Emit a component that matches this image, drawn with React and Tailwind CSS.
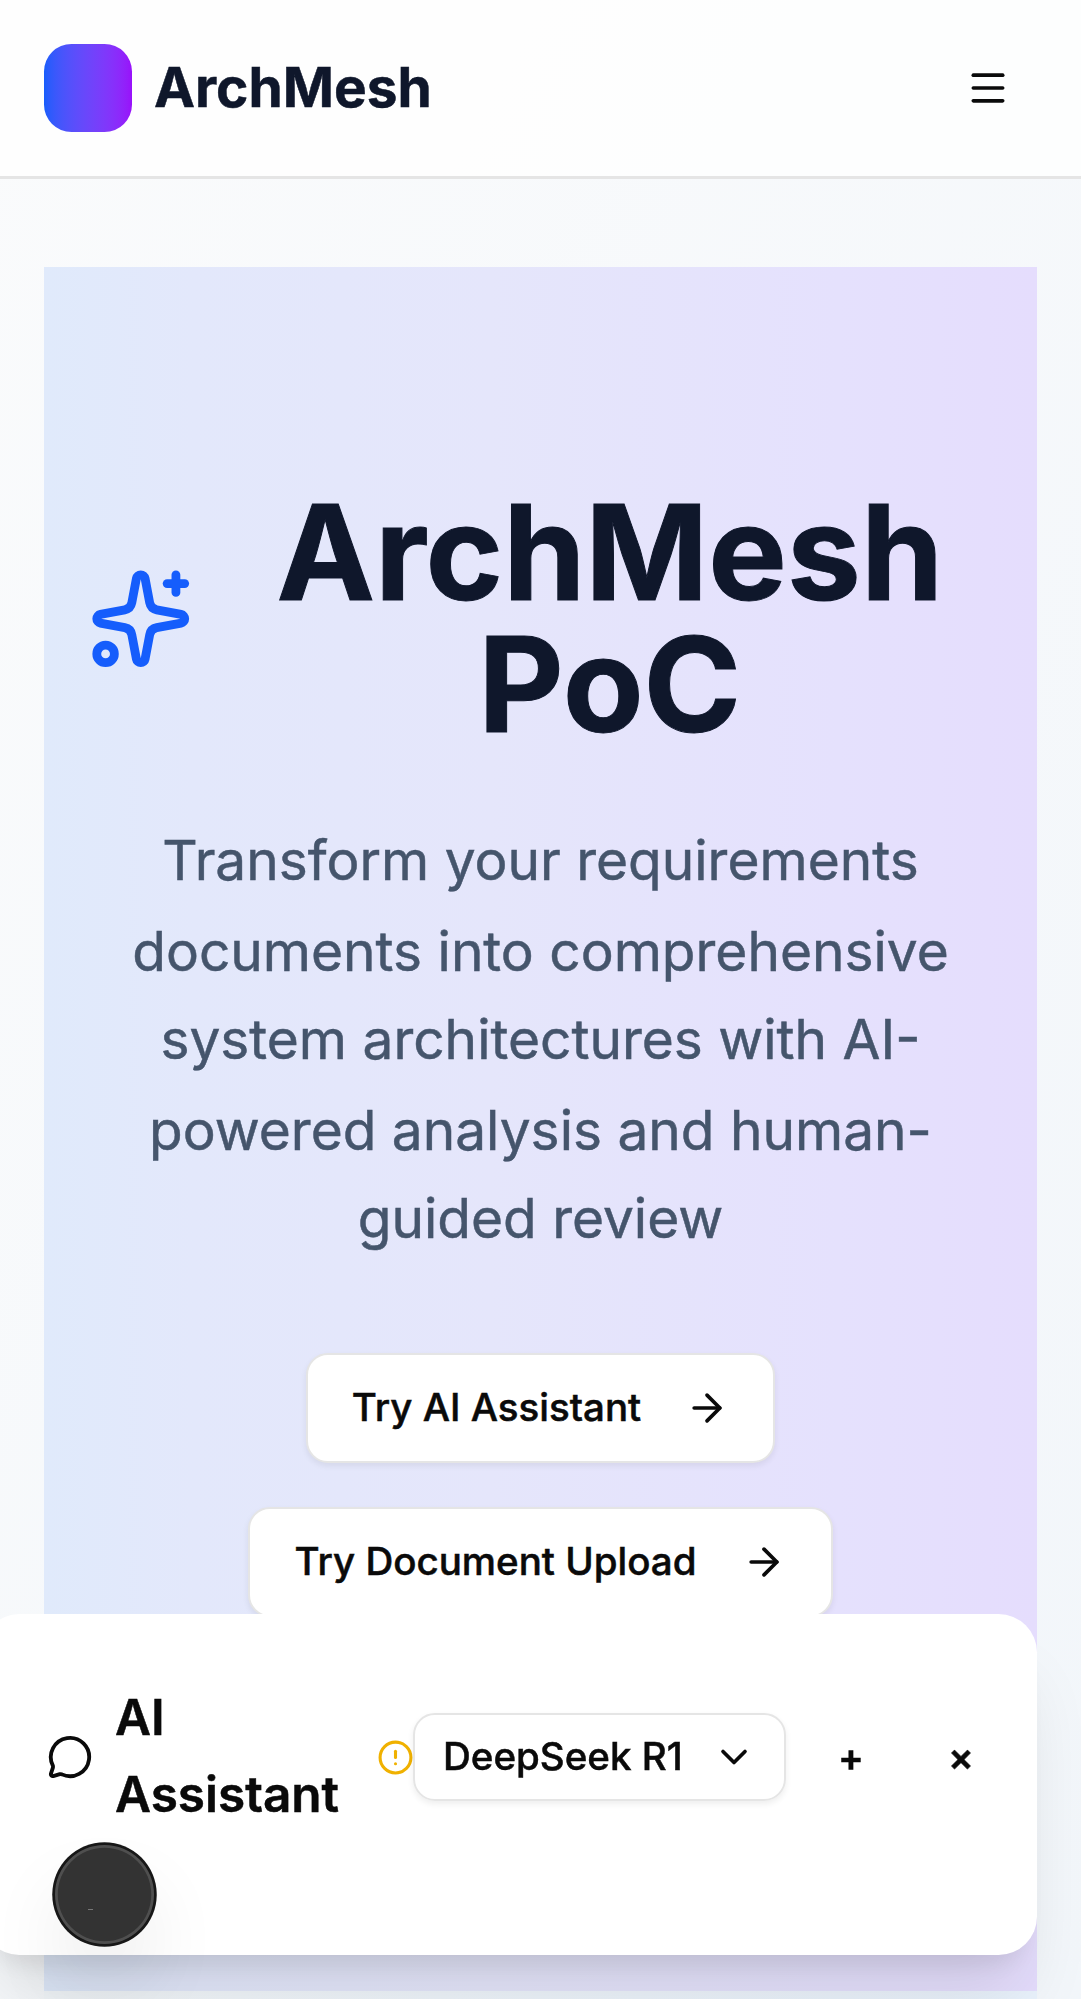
import { Menu, Sparkles, ArrowRight, MessageCircle, CircleAlert, ChevronDown } from "lucide-react";

function Header() {
  return (
    <header className="flex h-[179px] shrink-0 items-center justify-between border-b-3 border-[#e5e5e5] bg-white/80 px-11">
      <div className="flex items-center gap-[22px]">
        <div className="size-[88px] rounded-[27.5px] bg-linear-to-r from-blue-600 to-purple-600" />
        <span className="-mt-[2px] text-[55px] leading-[77px] font-bold text-slate-900">ArchMesh</span>
      </div>
      <button className="flex h-[88px] w-[99px] items-center justify-center">
        <Menu size={44} />
      </button>
    </header>
  );
}

function HeroButton({ children, className }) {
  return (
    <button
      className={`flex h-[110px] items-center rounded-[22px] border-[2px] border-[#e5e5e5] bg-white text-[38.5px] font-medium shadow-[0_3px_6px_rgba(0,0,0,0.07)] ${className}`}
    >
      {children}
      <ArrowRight size={44} />
    </button>
  );
}

function Hero() {
  return (
    <section className="mx-11 mt-[88px] flex h-[1724px] shrink-0 flex-col items-center bg-[linear-gradient(90deg,#e0eafb_0%,#e3e8fb_15%,#e5e6fb_45%,#e5e1fd_80%,#e5ddfd_100%)] px-11 pt-[220px]">
      <div className="flex h-[264px] w-full items-center">
        <Sparkles size={105.5} className="mr-[33px] shrink-0 text-blue-600" />
        <h1 className="-mt-[2px] grow text-center text-[132px] leading-[132px] font-bold text-slate-900 [-webkit-text-stroke:1px]">
          ArchMesh
          <br />
          PoC
        </h1>
      </div>
      <p className="mt-[66px] text-center text-[55px] leading-[86px] text-slate-600">
        <span className="block h-[91px]">Transform your requirements</span>
        <span className="block h-[88px]">documents into comprehensive</span>
        <span className="block h-[91px]">system architectures with AI-</span>
        <span className="block h-[88px]">powered analysis and human-</span>
        <span className="block h-[89px]">guided review</span>
      </p>
      <div className="mt-[89px] flex flex-col items-center gap-11">
        <HeroButton className="gap-11 px-11">Try AI Assistant</HeroButton>
        <HeroButton className="gap-[46px] px-[45px]">Try Document Upload</HeroButton>
      </div>
    </section>
  );
}

function AssistantPanel() {
  return (
    <aside className="fixed right-11 bottom-11 flex h-[341px] w-[1056px] items-start rounded-[38.5px] bg-white pt-[66px] pl-[66px] shadow-[0_55px_69px_-14px_rgba(0,0,0,0.1),0_22px_28px_-16px_rgba(0,0,0,0.1)]">
      <div className="flex h-[154px] items-center">
        <MessageCircle size={46} className="shrink-0" />
        <h2 className="-mt-[3px] ml-[22px] w-[262px] text-[49.5px] leading-[77px] font-semibold">AI Assistant</h2>
        <CircleAlert size={37} className="shrink-0 text-[#f0b100]" />
        <button className="-ml-px flex h-[88px] w-[373px] items-center justify-between rounded-[22px] border-[2px] border-[#e5e5e5] px-[28px] text-[38.5px] font-medium shadow-[0_3px_6px_rgba(0,0,0,0.07)]">
          DeepSeek R1
          <ChevronDown size={44} />
        </button>
        <button className="ml-[21px] size-[88px] pt-[2px] text-[38.5px] font-semibold">+</button>
        <button className="ml-[22px] size-[88px] pt-[2px] text-[38.5px] font-semibold">×</button>
      </div>
    </aside>
  );
}

function DevBadge() {
  return (
    <div className="fixed bottom-[55px] left-[55px] size-[99px] rounded-full bg-[#333333] shadow-[0_0_0_2.75px_#171717,inset_0_0_0_2.75px_rgba(255,255,255,0.14),0_44px_88px_-22px_rgba(0,0,0,0.24)]">
      <div className="mt-[64px] ml-[33px] h-px w-[5px] bg-[#777777]" />
    </div>
  );
}

export default function App() {
  return (
    <div className="flex h-[1999px] flex-col overflow-hidden bg-linear-to-br from-[#fafbfc] to-[#f2f6fa] font-['Inter',sans-serif] text-neutral-950 [-webkit-text-stroke:0.5px]">
      <Header />
      <Hero />
      <div className="mx-11 grow bg-linear-to-r from-[#f3f7fa] to-[#e9f2fc]" />
      <AssistantPanel />
      <DevBadge />
    </div>
  );
}
